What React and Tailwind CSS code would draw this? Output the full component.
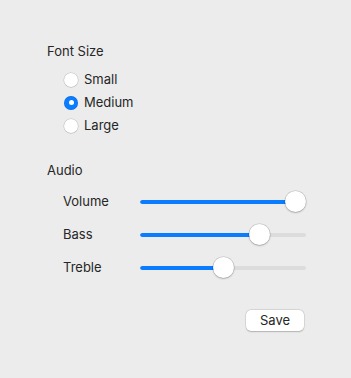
import { useState } from 'react';

const Radio = ({ label, checked, onSelect }) => (
  <button type="button" onClick={onSelect} className="flex items-center h-[23px] gap-[6px] text-left">
    {checked ? (
      <span className="w-[14px] h-[14px] rounded-full bg-[#0a7cff] flex items-center justify-center shadow-[inset_0_0_0_0.5px_rgba(0,0,0,0.15)]">
        <span className="w-[5px] h-[5px] rounded-full bg-white" />
      </span>
    ) : (
      <span className="w-[14px] h-[14px] rounded-full bg-white shadow-[0_0_0_0.5px_rgba(0,0,0,0.18),0_0.5px_1px_rgba(0,0,0,0.12)]" />
    )}
    <span className="text-[13px] text-[#262626]">{label}</span>
  </button>
);

const Slider = ({ label, value }) => (
  <div className="flex items-center h-[33px]">
    <span className="w-[77px] text-[13px] text-[#262626]">{label}</span>
    <div className="relative w-[166px] h-[21px] flex items-center">
      <div className="w-full h-[4px] rounded-full bg-[#dcdcdc] overflow-hidden">
        <div className="h-full bg-[#0a7cff] rounded-full" style={{ width: `${10 + value * 1.45}px` }} />
      </div>
      <div
        className="absolute top-0 w-[21px] h-[21px] rounded-full bg-white shadow-[0_0_0_0.5px_rgba(0,0,0,0.18),0_1px_2px_rgba(0,0,0,0.2)]"
        style={{ left: `${value * 1.45}px` }}
      />
    </div>
  </div>
);

export default function App() {
  const [size, setSize] = useState('Medium');

  return (
    <div
      className="w-[351px] h-[378px] bg-[#ececec] pt-[43px] pl-[47px] flex flex-col"
      style={{ fontFamily: 'Inter, "Liberation Sans", sans-serif' }}
    >
      <div className="text-[13px] leading-[16px] text-[#262626]">Font Size</div>
      <div className="mt-[9px] pl-[17px] flex flex-col">
        {['Small', 'Medium', 'Large'].map((s) => (
          <Radio key={s} label={s} checked={size === s} onSelect={() => setSize(s)} />
        ))}
      </div>

      <div className="mt-[25px] text-[13px] leading-[16px] text-[#262626]">Audio</div>
      <div className="mt-[7px] pl-[16px] flex flex-col">
        <Slider label="Volume" value={100} />
        <Slider label="Bass" value={75} />
        <Slider label="Treble" value={50} />
      </div>

      <div className="mt-[26px] w-[257px] flex justify-end">
        <button
          type="button"
          className="w-[58px] h-[21px] rounded-[5px] bg-white text-[13px] text-[#262626] shadow-[0_0_0_0.5px_rgba(0,0,0,0.12),0_0.5px_1.5px_rgba(0,0,0,0.2)]"
        >
          Save
        </button>
      </div>
    </div>
  );
}
